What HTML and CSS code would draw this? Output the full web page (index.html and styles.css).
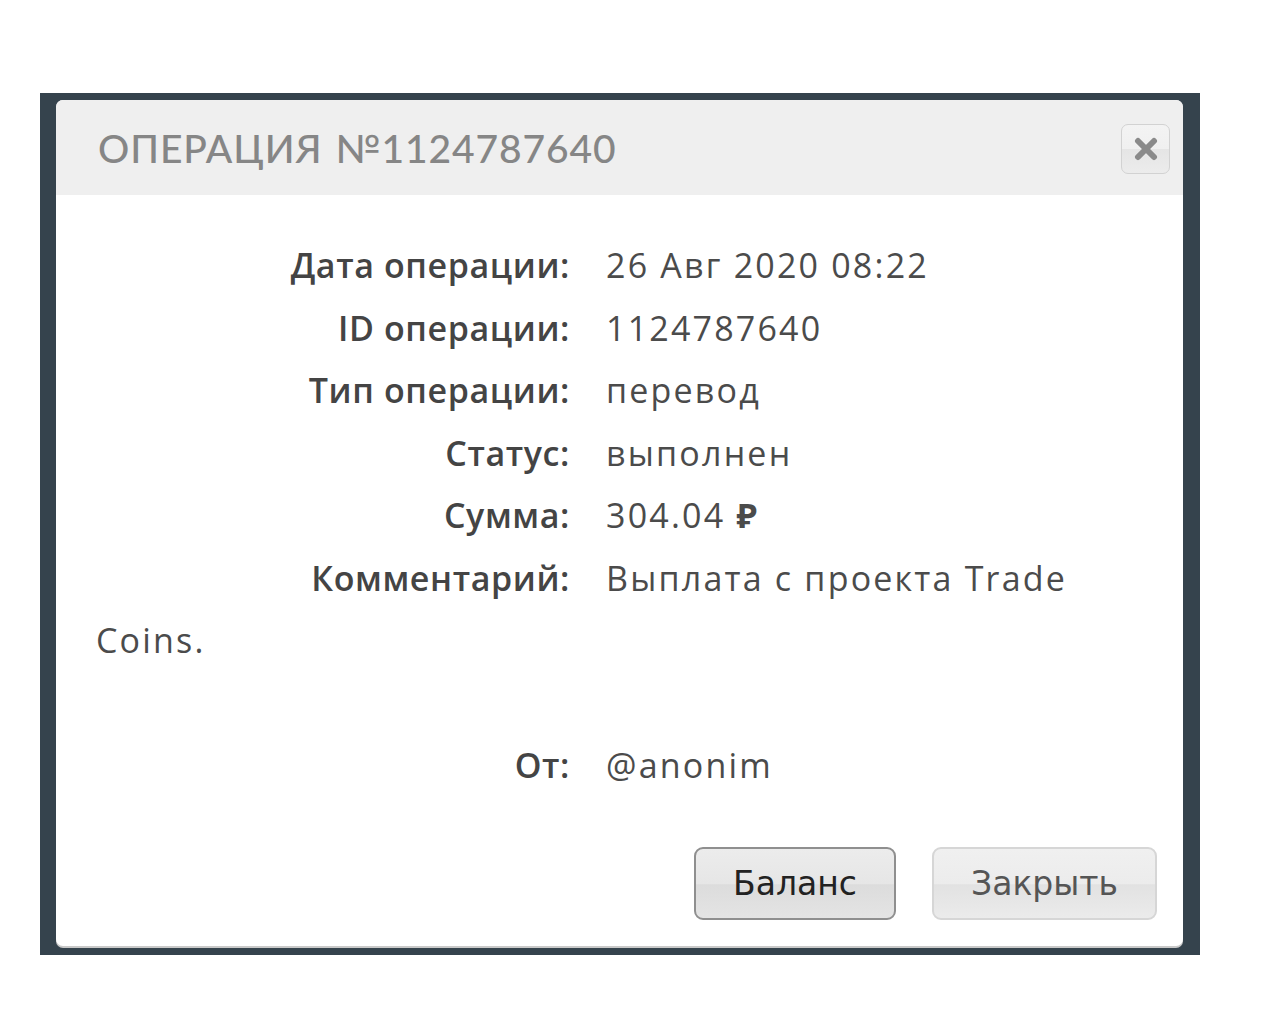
FILE: index.html
```html
<!DOCTYPE html>
<html lang="ru">
<head>
<meta charset="utf-8">
<title>Операция</title>
<link rel="stylesheet" href="styles.css">
</head>
<body>
<div class="backdrop">
  <div class="modal">
    <div class="modal-header">
      <h2 class="modal-title">ОПЕРАЦИЯ №1124787640</h2>
      <button class="close" type="button" aria-label="Закрыть">
        <svg width="24" height="24" viewBox="0 0 24 24"><path d="M4 4 L20 20 M20 4 L4 20" stroke="#8a8a8a" stroke-width="6" stroke-linecap="round"/></svg>
      </button>
    </div>
    <div class="modal-body">
      <div class="row"><span class="label">Дата операции:</span>26 Авг 2020 08:22</div>
      <div class="row"><span class="label">ID операции:</span>1124787640</div>
      <div class="row"><span class="label">Тип операции:</span>перевод</div>
      <div class="row"><span class="label">Статус:</span>выполнен</div>
      <div class="row"><span class="label">Сумма:</span>304.04 <span class="rub">₽</span></div>
      <div class="row"><span class="label">Комментарий:</span><span class="nowrap">Выплата с проекта Trade</span> <span class="nowrap">Coins.</span></div>
      <div class="row blank"></div>
      <div class="row"><span class="label">От:</span>@anonim</div>
    </div>
    <div class="modal-footer">
      <button class="btn btn-active" type="button">Баланс</button>
      <button class="btn" type="button">Закрыть</button>
    </div>
  </div>
</div>
</body>
</html>
```

FILE: styles.css
```css
html, body {
  margin: 0;
  padding: 0;
  background: #ffffff;
}

body {
  font-family: "Open Sans", "Noto Sans", sans-serif;
}

.backdrop {
  margin: 93px 0 0 40px;
  width: 1160px;
  height: 862px;
  background: #35434d;
  padding: 7px 17px 9px 16px;
  box-sizing: border-box;
}

.modal {
  background: #ffffff;
  border-radius: 7px;
  height: 846px;
  box-shadow: 0 2px 0 #c9c9c9;
  display: flex;
  flex-direction: column;
  overflow: hidden;
}

.modal-header {
  background: #efefef;
  height: 95px;
  display: flex;
  align-items: center;
  justify-content: space-between;
  padding: 0 13px 0 42px;
  box-sizing: border-box;
}

.modal-title {
  margin: 0;
  font-family: "Lato", "DejaVu Sans", sans-serif;
  font-weight: 500;
  font-size: 39px;
  letter-spacing: 0.9px;
  word-spacing: 2px;
  color: #868686;
}

.close {
  width: 49px;
  height: 50px;
  border: 1px solid #d2d2d2;
  border-radius: 7px;
  background: linear-gradient(#f3f3f3 0%, #f0f0f0 50%, #e5e5e5 51%, #ececec 100%);
  display: flex;
  align-items: center;
  justify-content: center;
  padding: 0;
  margin-top: 3px;
}

.modal-body {
  flex: 1;
  padding: 39px 40px 0 40px;
  font-size: 34px;
  letter-spacing: 2.2px;
  color: #4b4b4b;
  line-height: 62.5px;
}

.row {
  min-height: 62.5px;
}

.nowrap {
  white-space: nowrap;
}

.label {
  display: inline-block;
  box-sizing: border-box;
  width: 510px;
  padding-right: 36px;
  text-align: right;
  font-weight: 600;
  letter-spacing: 0.6px;
  color: #444444;
}

.rub {
  font-weight: 700;
}

.modal-footer {
  display: flex;
  justify-content: flex-end;
  gap: 36px;
  padding: 0 26px 26px 0;
}

.btn {
  font-family: "DejaVu Sans", Verdana, sans-serif;
  font-size: 33px;
  color: #555555;
  height: 73px;
  padding: 0 37px;
  border: 2px solid #d6d6d6;
  border-radius: 9px;
  background: linear-gradient(#f0f0f0 0%, #ececec 50%, #e2e2e2 52%, #ebebeb 100%);
}

.btn-active {
  border-color: #8f8f8f;
  color: #222222;
  background: linear-gradient(#ececec 0%, #e6e6e6 50%, #dcdcdc 52%, #e4e4e4 100%);
}
```
